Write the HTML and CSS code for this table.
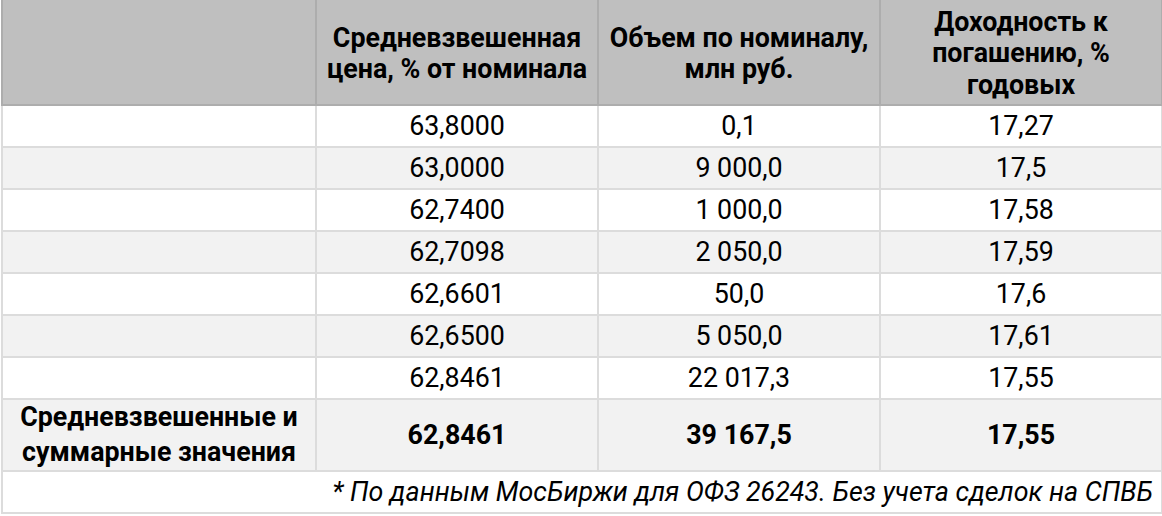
FILE: index.html
```html
<!DOCTYPE html>
<html lang="ru">
<head>
<meta charset="utf-8">
<title>ОФЗ 26243</title>
<link rel="stylesheet" href="styles.css">
</head>
<body>
<table class="deals">
  <colgroup>
    <col class="c-label">
    <col class="c-num">
    <col class="c-num">
    <col class="c-num">
  </colgroup>
  <thead>
    <tr class="head">
      <th></th>
      <th>Средневзвешенная цена, % от номинала</th>
      <th>Объем по номиналу, млн руб.</th>
      <th>Доходность к погашению, % годовых</th>
    </tr>
  </thead>
  <tbody>
    <tr class="row"><td></td><td>63,8000</td><td>0,1</td><td>17,27</td></tr>
    <tr class="row alt"><td></td><td>63,0000</td><td>9 000,0</td><td>17,5</td></tr>
    <tr class="row"><td></td><td>62,7400</td><td>1 000,0</td><td>17,58</td></tr>
    <tr class="row alt"><td></td><td>62,7098</td><td>2 050,0</td><td>17,59</td></tr>
    <tr class="row"><td></td><td>62,6601</td><td>50,0</td><td>17,6</td></tr>
    <tr class="row alt"><td></td><td>62,6500</td><td>5 050,0</td><td>17,61</td></tr>
    <tr class="row"><td></td><td>62,8461</td><td>22 017,3</td><td>17,55</td></tr>
    <tr class="total alt"><td>Средневзвешенные и суммарные значения</td><td>62,8461</td><td>39 167,5</td><td>17,55</td></tr>
    <tr class="note"><td colspan="4">* По данным МосБиржи для ОФЗ 26243. Без учета сделок на СПВБ</td></tr>
  </tbody>
</table>
</body>
</html>
```

FILE: styles.css
```css
html, body {
  margin: 0;
  padding: 0;
  background: #ffffff;
}

.deals {
  border-collapse: collapse;
  table-layout: fixed;
  width: 1161px;
  font-family: Roboto, "Noto Sans", Arial, sans-serif;
  font-size: 26.8px;
  color: #000000;
  margin-left: 1px;
}

.c-label { width: 314px; }
.c-num { width: 282px; }

.deals th,
.deals td {
  border: 2px solid #dcdcdc;
  padding: 0 6px;
  text-align: center;
  vertical-align: middle;
}

.head th {
  background: #bfbfbf;
  border-color: #adadad;
  border-top: 0;
  font-weight: 700;
  line-height: 31.5px;
  height: 100px;
  padding: 4px 6px 0;
}

.row td {
  height: 40px;
  line-height: 30px;
}

.alt td {
  background: #f2f2f2;
}

.total td {
  height: 70px;
  font-weight: 700;
  line-height: 35px;
}

.note td {
  height: 40px;
  text-align: right;
  font-style: italic;
  padding-right: 8px;
}
```
